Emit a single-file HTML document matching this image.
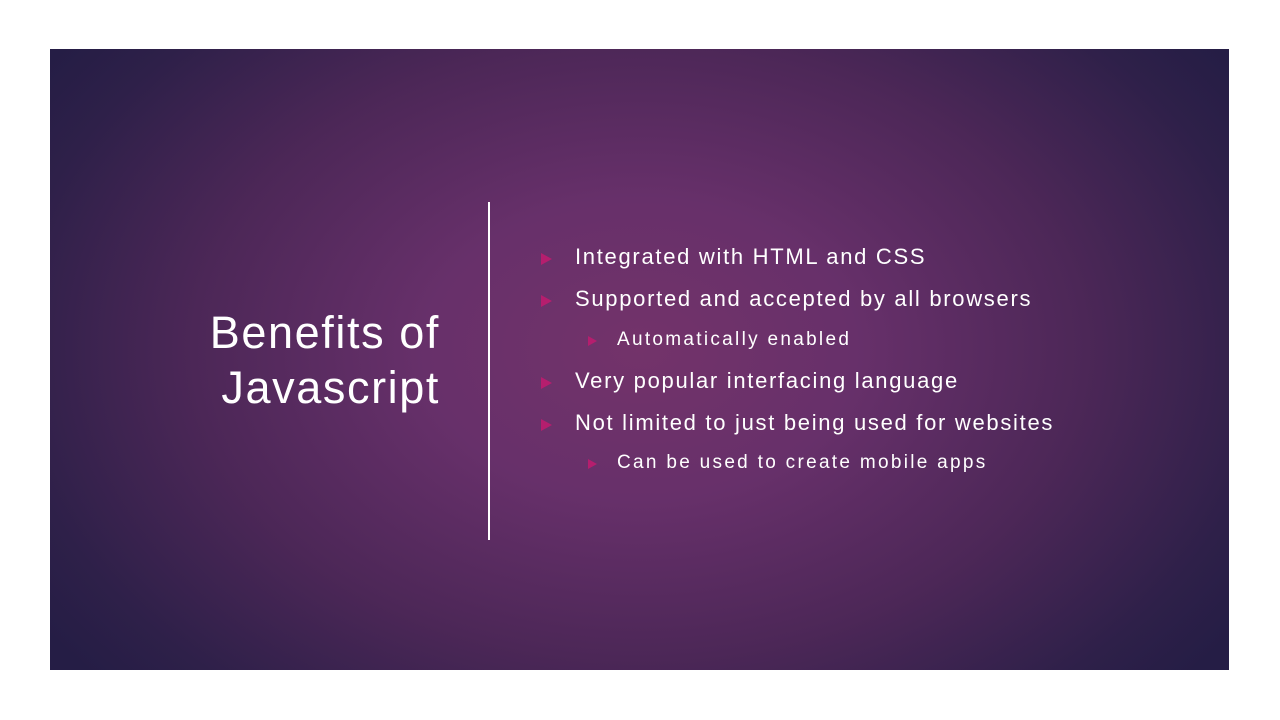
<!DOCTYPE html>
<html><head><style>
body{margin:0;width:1280px;height:720px;background:#fff;position:relative;overflow:hidden;font-family:"Liberation Sans","DejaVu Sans",sans-serif;}
.slide{position:absolute;left:50px;top:49px;width:1179px;height:621px;background:radial-gradient(ellipse 720px 500px at 590px 300px,#73336a 0%,#67306a 30%,#4c2757 62%,#2e2049 88%,#251d45 100%);}
.title{position:absolute;left:100px;top:256px;width:290px;text-align:right;color:#fff;font-size:45px;line-height:55px;letter-spacing:1.6px;}
.line{position:absolute;left:438px;top:153px;width:2px;height:338px;background:#fff;}
.t{position:absolute;color:#fff;white-space:nowrap;letter-spacing:1.7px;}
.u{letter-spacing:2.3px;}
.b{position:absolute;width:0;height:0;border-top:6px solid transparent;border-bottom:6px solid transparent;border-left:11px solid #b51e6e;}
.s{border-top:5px solid transparent;border-bottom:5px solid transparent;border-left:9px solid #b51e6e;}
</style></head><body>
<div class="slide">
<div class="title">Benefits of Javascript</div>
<div class="line"></div>
<div class="b" style="left:491px;top:204px"></div><div class="t" style="left:525px;top:195px;font-size:22px">Integrated with HTML and CSS</div>
<div class="b" style="left:491px;top:246px"></div><div class="t" style="left:525px;top:237px;font-size:22px">Supported and accepted by all browsers</div>
<div class="b s" style="left:538px;top:287px"></div><div class="t u" style="left:567px;top:280px;font-size:19px">Automatically enabled</div>
<div class="b" style="left:491px;top:328px"></div><div class="t" style="left:525px;top:319px;font-size:22px">Very popular interfacing language</div>
<div class="b" style="left:491px;top:370px"></div><div class="t" style="left:525px;top:361px;font-size:22px">Not limited to just being used for websites</div>
<div class="b s" style="left:538px;top:410px"></div><div class="t u" style="left:567px;top:403px;font-size:19px">Can be used to create mobile apps</div>
</div>
</body></html>
